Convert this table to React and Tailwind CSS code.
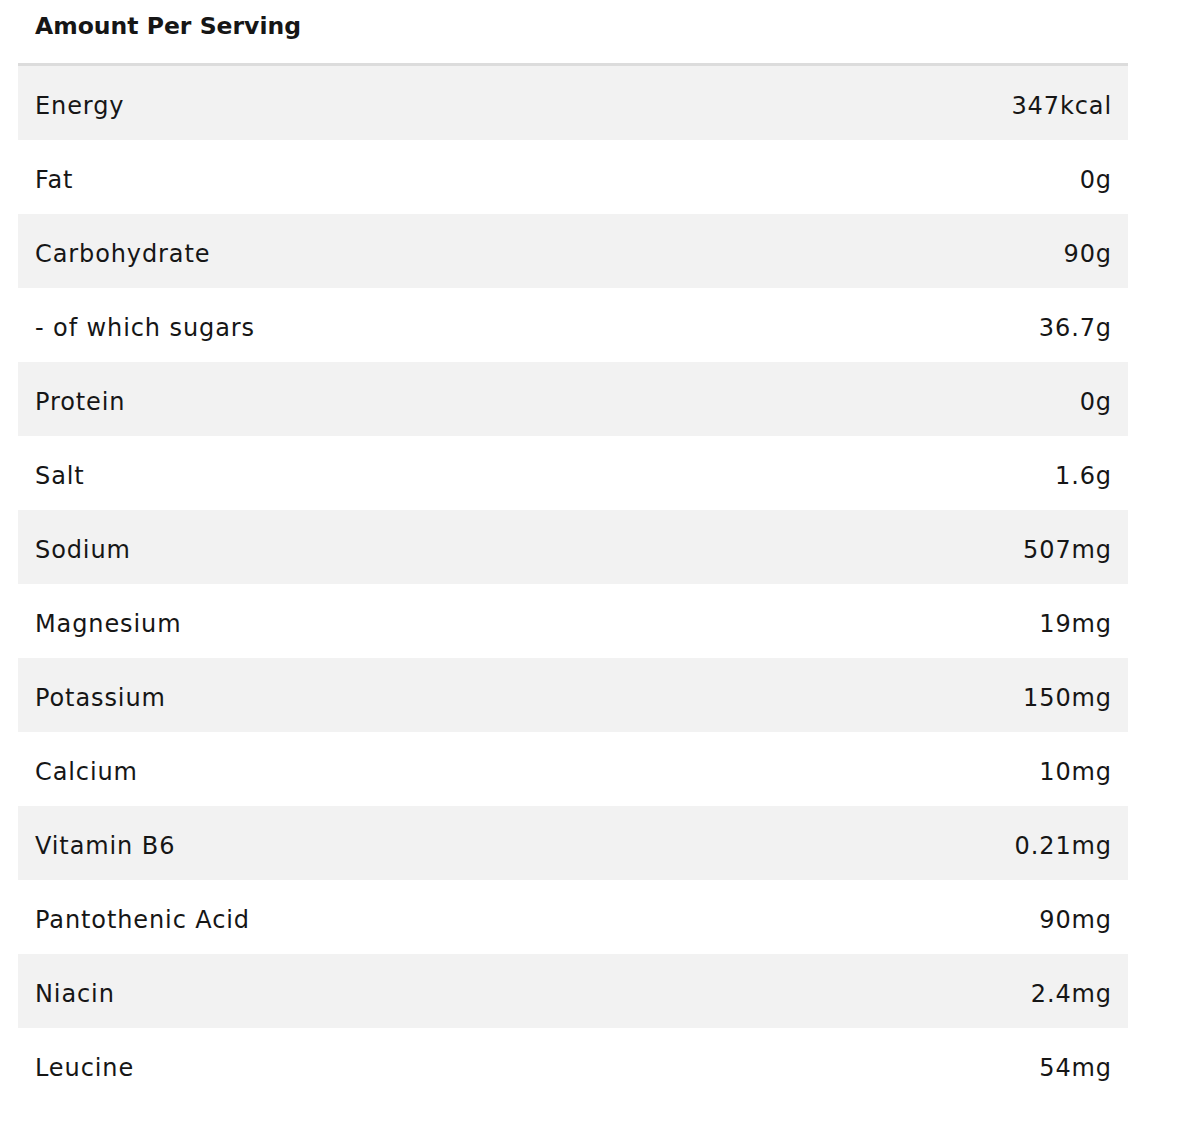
const rows = [
  ['Energy', '347kcal'],
  ['Fat', '0g'],
  ['Carbohydrate', '90g'],
  ['- of which sugars', '36.7g'],
  ['Protein', '0g'],
  ['Salt', '1.6g'],
  ['Sodium', '507mg'],
  ['Magnesium', '19mg'],
  ['Potassium', '150mg'],
  ['Calcium', '10mg'],
  ['Vitamin B6', '0.21mg'],
  ['Pantothenic Acid', '90mg'],
  ['Niacin', '2.4mg'],
  ['Leucine', '54mg'],
]

const App = () => {
  return (
    <div className="min-h-screen bg-white pl-[18px] pr-[62px] pt-[8px] text-[#161616]" style={{ fontFamily: '"DejaVu Sans", "Liberation Sans", sans-serif' }}>
      <h2 className="pl-[17px] h-[55px] text-[23.5px] font-bold leading-[36px]">
        Amount Per Serving
      </h2>
      <div className="border-t-[3px] border-[#dcdcdc]">
        {rows.map(([name, value], i) => (
          <div
            key={name}
            className={`flex items-center justify-between h-[74px] pl-[17px] pr-[16px] pt-[6px] text-[24px] tracking-[0.9px] ${i % 2 === 0 ? 'bg-[#f2f2f2]' : 'bg-white'}`}
          >
            <span>{name}</span>
            <span>{value}</span>
          </div>
        ))}
      </div>
    </div>
  )
}

export default App
